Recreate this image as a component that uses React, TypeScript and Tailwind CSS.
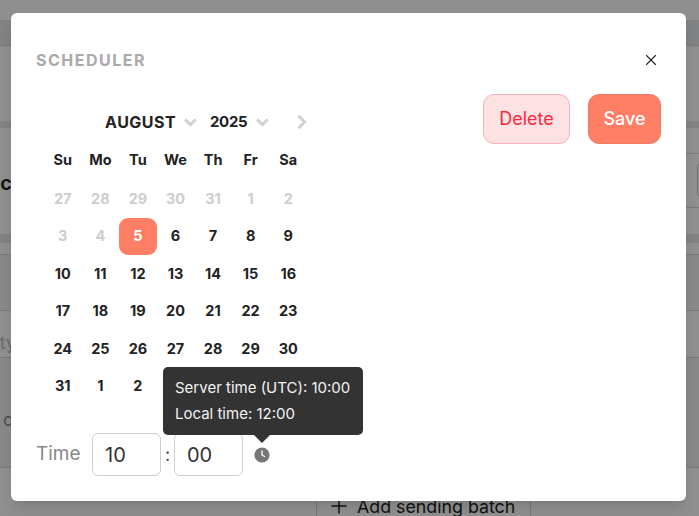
import { Plus, X } from "lucide-react";

const font = "font-['Inter',sans-serif]";
const weekdays = ["Su", "Mo", "Tu", "We", "Th", "Fr", "Sa"];
const days = [
  27, 28, 29, 30, 31, 1, 2, 3, 4, 5, 6, 7, 8, 9, 10, 11, 12, 13, 14, 15, 16, 17, 18, 19, 20, 21,
  22, 23, 24, 25, 26, 27, 28, 29, 30, 31, 1, 2,
];

function Backdrop() {
  return (
    <div className="h-[516px] overflow-hidden bg-white text-[#222]">
      <div className="h-5" />
      <div className="h-[26px] border-b border-[#d8d8d8] bg-[#e5e8eb]" />
      <div className="h-[75px]" />
      <div className="h-[7px] bg-[#e5e8eb]" />
      <div className="ml-3 h-[26px] border-b border-[#d8d8d8]" />
      <div className="flex h-[54px] items-center justify-between">
        <span className="ml-[-12px] pt-[4px] text-xl font-semibold">oc</span>
        <div className="flex h-full w-[687px] justify-end border-b border-[#d8d8d8] pt-[9px]">
          <div className="mr-[-20px] h-[34px] w-[22px] rounded-sm border border-[#c8c8c8]" />
        </div>
      </div>
      <div className="h-[26px]" />
      <div className="h-[9px] bg-[#e5e8eb]" />
      <div className="h-3 border-b border-[#d8d8d8]" />
      <div className="h-14 border-b border-[#d8d8d8] bg-[#f2f3f5]" />
      <div className="flex h-[47px] items-start border-b border-[#d8d8d8] pt-[18px]">
        <span className="ml-[-14px] text-lg text-[#bbb]">Qty</span>
      </div>
      <div className="flex h-[110px] flex-col border-b border-[#d8d8d8] bg-[#f2f3f5]">
        <span className="mt-[48px] ml-[3px] text-lg text-[#888]">c</span>
      </div>
      <div className="ml-[316px] flex h-12 w-[215px] items-start gap-[6px] border-x border-[#d8d8d8] pt-[26px] pl-[10px] text-[17.8px]">
        <Plus size={24} strokeWidth={1.5} />
        Add sending batch
      </div>
    </div>
  );
}

function Calendar() {
  return (
    <div className="mt-4 ml-2 w-[263px]">
      <div className="flex h-6 items-center pl-[61px] text-base font-bold tracking-[0.5px] text-[#222]">
        <span>AUGUST</span>
        <svg viewBox="0 0 14 9" className="ml-[8px] h-[9px] w-[14px] text-[#cfcfcf]">
          <path d="M1.2 1.2 7 7l5.8-5.8" fill="none" stroke="currentColor" strokeWidth="3" />
        </svg>
        <span className="ml-[13px] text-[15px] tracking-[-0.3px]">2025</span>
        <svg viewBox="0 0 14 9" className="ml-[9px] h-[9px] w-[14px] text-[#cfcfcf]">
          <path d="M1.2 1.2 7 7l5.8-5.8" fill="none" stroke="currentColor" strokeWidth="3" />
        </svg>
        <svg viewBox="0 0 11 16" className="ml-[28px] h-4 w-[11px] text-[#cfcfcf]">
          <path d="M1.6 1.2 8.4 8l-6.8 6.8" fill="none" stroke="currentColor" strokeWidth="3" />
        </svg>
      </div>
      <div className="mt-[14.5px] grid grid-cols-7 text-center text-[14.5px] font-bold text-[#222]">
        {weekdays.map((day) => (
          <div key={day} className="h-[22px] leading-[22px]">
            {day}
          </div>
        ))}
      </div>
      <div className="mt-[9.5px] grid grid-cols-7 text-center text-[14.5px] font-bold text-[#222]">
        {days.map((day, idx) => {
          const muted = idx < 9;
          const selected = idx === 9;
          return (
            <div
              key={idx}
              className={`flex h-[37.5px] items-center justify-center ${
                muted ? "text-[#cdcdcd]" : ""
              } ${selected ? "rounded-[9px] bg-[#ff7e66] text-white" : ""}`}
            >
              {day}
            </div>
          );
        })}
      </div>
    </div>
  );
}

function TimeRow() {
  return (
    <div className="flex items-center">
      <span className="w-14 text-[19px] text-[#888]">Time</span>
      <input
        readOnly
        value="10"
        className="h-[43px] w-[69px] rounded-md border border-[#cfcfcf] pl-3 text-xl text-[#333] outline-none"
      />
      <span className="w-[13px] text-center text-lg text-[#444]">:</span>
      <input
        readOnly
        value="00"
        className="h-[43px] w-[69px] rounded-md border border-[#cfcfcf] pl-3 text-xl text-[#333] outline-none"
      />
      <div className="relative ml-[11px] h-4 w-4">
        <svg viewBox="0 0 16 16" className="h-4 w-4">
          <circle cx="8" cy="8" r="7.6" fill="#777" />
          <path d="M8 3.6V8l3 1.8" fill="none" stroke="#fff" strokeWidth="1.3" />
        </svg>
        <div className="absolute bottom-[28px] left-[-91px] w-[200px] rounded-[5px] bg-[#333] px-3 py-2 text-[15px] leading-[26px] text-[#f2f2f2]">
          <div>Server time (UTC): 10:00</div>
          <div>Local time: 12:00</div>
          <div className="absolute top-full left-[91px] border-x-8 border-t-8 border-x-transparent border-t-[#333]" />
        </div>
      </div>
    </div>
  );
}

export default function App() {
  return (
    <div className={`relative h-[516px] w-[699px] overflow-hidden ${font}`}>
      <Backdrop />
      <div className="absolute inset-0 bg-black/[0.44]" />
      <div className="absolute top-[13px] left-[11px] h-[488px] w-[675px] rounded-md bg-white px-[25px] shadow-lg">
        <div className="flex h-[81px] items-start justify-between pt-[35px]">
          <h2 className="text-base leading-6 font-bold tracking-[1.5px] text-[#aaa]">SCHEDULER</h2>
          <X size={18} strokeWidth={1.5} className="mt-[3px] mr-px text-[#222]" />
        </div>
        <div className="flex items-start justify-between">
          <Calendar />
          <div className="flex gap-[18px]">
            <button className="h-[50px] w-[87px] rounded-[11px] border border-[#fbb1b5] bg-[#fde2e3] text-lg text-[#fb2a3e]">
              Delete
            </button>
            <button className="h-[50px] w-[73px] rounded-[11px] border border-[#ec7a66] bg-[#ff7e66] text-lg font-medium text-white">
              Save
            </button>
          </div>
        </div>
        <div className="mt-7">
          <TimeRow />
        </div>
      </div>
    </div>
  );
}
